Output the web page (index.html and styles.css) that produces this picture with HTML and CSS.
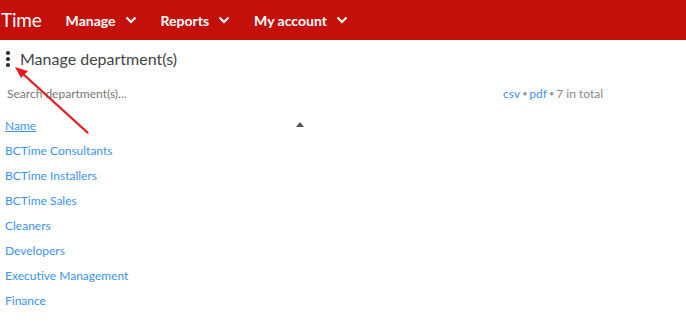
FILE: index.html
```html
<!DOCTYPE html>
<html>
<head>
<meta charset="utf-8">
<link rel="stylesheet" href="styles.css">
</head>
<body>
<header class="topbar">
  <span class="brand">Time</span>
  <nav class="nav">
    <span class="nav-item">Manage <svg class="chev" viewBox="0 0 12 8"><path d="M1.5 1.5 L6 6 L10.5 1.5" /></svg></span>
    <span class="nav-item">Reports <svg class="chev" viewBox="0 0 12 8"><path d="M1.5 1.5 L6 6 L10.5 1.5" /></svg></span>
    <span class="nav-item">My account <svg class="chev" viewBox="0 0 12 8"><path d="M1.5 1.5 L6 6 L10.5 1.5" /></svg></span>
  </nav>
</header>
<main class="content">
  <div class="title-row">
    <span class="kebab"><i></i><i></i><i></i></span>
    <h1 class="title">Manage department(s)</h1>
  </div>
  <div class="toolbar">
    <input class="search" type="text" placeholder="Search department(s)...">
    <div class="meta"><a class="link">csv</a><span class="dot">•</span><a class="link">pdf</a><span class="dot">•</span>7 in total</div>
  </div>
  <div class="table">
    <div class="thead">
      <a class="th-link">Name</a>
      <span class="sort"></span>
    </div>
    <a class="row">BCTime Consultants</a>
    <a class="row">BCTime Installers</a>
    <a class="row">BCTime Sales</a>
    <a class="row">Cleaners</a>
    <a class="row">Developers</a>
    <a class="row">Executive Management</a>
    <a class="row">Finance</a>
  </div>
</main>
<svg class="annot" width="686" height="332" viewBox="0 0 686 332">
  <line x1="89" y1="134" x2="24" y2="75" stroke="#9a9a9a" stroke-opacity="0.35" stroke-width="3"/>
  <line x1="88" y1="133" x2="22" y2="73" stroke="#e8191b" stroke-width="2"/>
  <polygon points="15,67 28,71 21,78" fill="#e8191b"/>
</svg>
</body>
</html>
```

FILE: styles.css
```css
* { box-sizing: border-box; }
html, body { margin: 0; padding: 0; background: #fff; }
body { font-family: Lato, "Open Sans", sans-serif; width: 686px; height: 332px; overflow: hidden; position: relative; }

.topbar {
  height: 40px;
  background: #c4100b;
  color: #fff;
  display: flex;
  align-items: center;
  padding-left: 1px;
}
.brand { font-size: 19px; font-weight: 400; letter-spacing: -0.2px; margin-right: 24px; margin-top: -1px; }
.nav { display: flex; gap: 24px; }
.nav-item { font-size: 14px; font-weight: 700; display: flex; align-items: center; gap: 9px; }
.chev { width: 12px; height: 8px; fill: none; stroke: #fff; stroke-width: 2; }

.content { padding: 0 5px; }
.title-row { display: flex; align-items: center; height: 38px; padding-left: 1px; }
.kebab { display: flex; flex-direction: column; gap: 2.6px; width: 14px; padding-left: 0; }
.kebab i { display: block; width: 3.5px; height: 3.5px; border-radius: 50%; background: #333; }
.title { margin: 0; font-size: 16px; font-weight: 400; color: #444; line-height: 20px; }

.toolbar { display: flex; align-items: center; justify-content: space-between; height: 30px; padding-right: 78px; }
.search { border: none; outline: none; padding: 0 0 0 2px; font-family: Lato, sans-serif; font-size: 12px; width: 200px; color: #555; }
.search::placeholder { color: #777; }
.meta { font-size: 12px; color: #888; display: flex; align-items: center; }
.link { color: #3d93ee; }
.dot { color: #999; font-size: 9px; margin: 0 2px; }

.table { display: flex; flex-direction: column; width: 310px; }
.thead { display: flex; align-items: center; justify-content: space-between; height: 26px; margin-top: 4px; padding-right: 10px; padding-left: 0; }
.th-link { font-size: 12px; color: #3d93ee; text-decoration: underline; }
.sort { width: 0; height: 0; border-left: 4.5px solid transparent; border-right: 4.5px solid transparent; border-bottom: 5px solid #555; margin-top: -1px; margin-right: 1px; }
.row { font-size: 12px; color: #3d93ee; height: 25px; line-height: 25px; }

.annot { position: absolute; left: 0; top: 0; pointer-events: none; }
```
